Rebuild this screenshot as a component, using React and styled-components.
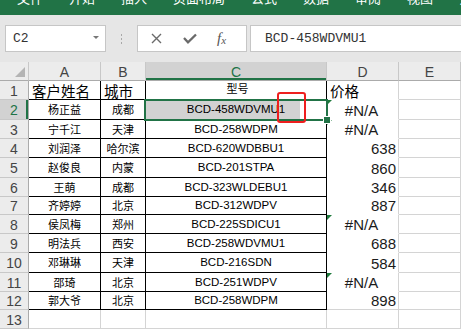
import React from 'react';
import styled, { createGlobalStyle } from 'styled-components';

const Global = createGlobalStyle`
  html, body { margin: 0; padding: 0; background: #fff; overflow: hidden; }
  body { font-family: "Noto Sans CJK SC", "Liberation Sans", sans-serif; }
`;

const Page = styled.div`
  width: 461px;
  height: 329px;
  overflow: hidden;
  position: relative;
  display: flex;
  flex-direction: column;
`;

const Ribbon = styled.div`
  flex: none;
  height: 15px;
  background: #217346;
  overflow: hidden;
`;

const Tabs = styled.div`
  display: flex;
  gap: 26px;
  padding-left: 17px;
  margin-top: -9px;
  color: #fff;
  font-size: 13px;
  line-height: 13px;
  white-space: nowrap;
`;

const FormulaArea = styled.div`
  flex: none;
  height: 47px;
  box-sizing: border-box;
  padding-top: 10px;
  background: #e6e6e6;
  display: flex;
  align-items: flex-start;
`;

const Box = styled.div`
  height: 27px;
  box-sizing: border-box;
  background: #fff;
  border: 1px solid #c6c6c6;
  display: flex;
  align-items: center;
`;

const NameBox = styled(Box)`
  margin-left: 5px;
  width: 101px;
  justify-content: space-between;
  padding: 0 6px 0 7px;
  font-family: "Liberation Mono", "DejaVu Sans Mono", monospace;
  font-size: 13px;
  color: #333;
`;

const DropArrow = styled.span`
  width: 0;
  height: 0;
  border-left: 3px solid transparent;
  border-right: 3px solid transparent;
  border-top: 3px solid #777;
  margin-top: -2px;
`;

const Sep = styled.div`
  width: 31px;
  height: 27px;
  display: flex;
  flex-direction: column;
  align-items: center;
  justify-content: center;
  gap: 2px;
`;

const Dot = styled.span`
  width: 1px;
  height: 2px;
  background: #a8a8a8;
`;

const FuncBox = styled(Box)`
  width: 110px;
  padding-left: 13px;
  gap: 21px;
  color: #6a6a6a;
`;

const Fx = styled.span`
  font-family: "Liberation Serif", serif;
  font-style: italic;
  font-size: 15px;
  color: #555;
  margin-left: -1px;
  sub {
    font-size: 11px;
    vertical-align: -1px;
  }
`;

const Input = styled(Box)`
  flex: 1;
  margin-left: 3px;
  margin-right: -4px;
  padding-left: 14px;
  font-family: "Liberation Mono", "DejaVu Sans Mono", monospace;
  font-size: 13px;
  color: #333;
`;

const Sheet = styled.div`
  flex: none;
  position: relative;
  display: grid;
  grid-template-columns: 29px 72px 45px 181px 72px 1fr;
  grid-template-rows: ${p => p.$rows};
`;

const Head = styled.div`
  box-sizing: border-box;
  background: ${p => (p.$sel ? '#d2d2d2' : '#ececec')};
  color: ${p => (p.$sel ? '#217346' : '#444')};
  border-right: 1px solid ${p => (p.$row ? '#ababab' : '#c8c8c8')};
  border-bottom: 1px solid ${p => (p.$row ? '#c8c8c8' : '#ababab')};
  box-shadow: ${p =>
    p.$sel ? (p.$row ? 'inset -2px 0 0 #217346' : 'inset 0 -2px 0 #217346') : 'none'};
  font-family: "Liberation Sans", Arial, sans-serif;
  font-size: 14px;
  display: flex;
  align-items: center;
  justify-content: center;
  padding-top: 1px;
`;

const Corner = styled(Head)`
  position: relative;
  &::after {
    content: '';
    position: absolute;
    right: 3px;
    bottom: 3px;
    border-left: 10px solid transparent;
    border-bottom: 10px solid #b4b4b4;
  }
`;

const Cell = styled.div`
  box-sizing: border-box;
  position: relative;
  overflow: hidden;
  white-space: nowrap;
  border-right: 1px solid ${p => (p.$boxed ? '#000' : '#d4d4d4')};
  border-bottom: 1px solid ${p => (p.$boxed ? '#000' : p.$noLine ? '#fff' : '#d4d4d4')};
  display: flex;
  color: #000;
`;

const TitleCell = styled(Cell)`
  align-items: flex-end;
  justify-content: ${p => (p.$center ? 'center' : 'flex-start')};
  padding: 0 0 0 3px;
  font-size: ${p => (p.$center ? '11px' : '14.5px')};
  line-height: 17px;
  padding-bottom: ${p => (p.$center ? '2px' : '0')};
`;

const NameCell = styled(Cell)`
  align-items: center;
  justify-content: center;
  font-size: 11px;
  padding-bottom: 1px;
`;

const ModelCell = styled(Cell)`
  align-items: center;
  justify-content: center;
  font-family: "Liberation Sans", Arial, sans-serif;
  font-size: 11.5px;
  padding-bottom: 1px;
  background: ${p => (p.$shade ? 'linear-gradient(to right, #d2d2d2 0 154px, #fff 154px)' : '#fff')};
`;

const PriceCell = styled(Cell)`
  align-items: flex-end;
  justify-content: ${p => (p.$err ? 'center' : 'flex-end')};
  padding-right: 2px;
  font-family: "Liberation Sans", Arial, sans-serif;
  font-size: 15px;
  line-height: 16px;
  color: #1b1b1b;
`;

const ErrMark = styled.span`
  position: absolute;
  left: 0;
  top: 0;
  width: 0;
  height: 0;
  border-top: 5px solid #1e7a3c;
  border-right: 5px solid transparent;
`;

const Selection = styled.div`
  position: absolute;
  left: 144px;
  top: 37px;
  width: 184px;
  height: 22px;
  box-sizing: border-box;
  border: 2px solid #217346;
  pointer-events: none;
`;

const Handle = styled.span`
  position: absolute;
  right: -4px;
  bottom: -4px;
  width: 6px;
  height: 6px;
  box-sizing: border-box;
  background: #217346;
  outline: 1px solid #fff;
`;

const Marker = styled.div`
  position: absolute;
  left: 277px;
  top: 92px;
  width: 29px;
  height: 31px;
  box-sizing: border-box;
  border: 2px solid #ee1f1f;
  border-radius: 3px;
  pointer-events: none;
`;

const tabs = ['文件', '开始', '插入', '页面布局', '公式', '数据', '审阅', '视图', '开发工具'];

const data = [
  ['杨正益', '成都', 'BCD-458WDVMU1', '#N/A'],
  ['宁千江', '天津', 'BCD-258WDPM', '#N/A'],
  ['刘润泽', '哈尔滨', 'BCD-620WDBBU1', '638'],
  ['赵俊良', '内蒙', 'BCD-201STPA', '860'],
  ['王萌', '成都', 'BCD-323WLDEBU1', '346'],
  ['齐婷婷', '北京', 'BCD-312WDPV', '887'],
  ['侯凤梅', '郑州', 'BCD-225SDICU1', '#N/A'],
  ['明法兵', '西安', 'BCD-258WDVMU1', '688'],
  ['邓琳琳', '天津', 'BCD-216SDN', '584'],
  ['邵琦', '北京', 'BCD-251WDPV', '#N/A'],
  ['郭大爷', '北京', 'BCD-258WDPM', '898'],
];

const rowHeights = [19, 19, 20, 19, 19, 20, 19, 18, 19, 19, 20, 19, 18, 19, 19];

const XIcon = () => (
  <svg width="11" height="11" viewBox="0 0 11 11">
    <path d="M1 1 L10 10 M10 1 L1 10" stroke="#6a6a6a" strokeWidth="1.4" fill="none" />
  </svg>
);

const CheckIcon = () => (
  <svg width="14" height="11" viewBox="0 0 14 11">
    <path d="M1 5 L5 9.3 L13 1.5" stroke="#6a6a6a" strokeWidth="2.3" fill="none" />
  </svg>
);

export default function App() {
  return (
    <Page>
      <Global />
      <Ribbon>
        <Tabs>
          {tabs.map(t => (
            <span key={t}>{t}</span>
          ))}
        </Tabs>
      </Ribbon>
      <FormulaArea>
        <NameBox>
          <span>C2</span>
          <DropArrow />
        </NameBox>
        <Sep>
          <Dot />
          <Dot />
          <Dot />
        </Sep>
        <FuncBox>
          <XIcon />
          <CheckIcon />
          <Fx>
            f<sub>x</sub>
          </Fx>
        </FuncBox>
        <Input>BCD-458WDVMU1</Input>
      </FormulaArea>
      <Sheet $rows={rowHeights.map(h => h + 'px').join(' ')}>
        <Corner />
        {['A', 'B', 'C', 'D', 'E'].map(c => (
          <Head key={c} $sel={c === 'C'}>
            {c}
          </Head>
        ))}

        <Head $row>1</Head>
        <TitleCell $boxed>客户姓名</TitleCell>
        <TitleCell $boxed>城市</TitleCell>
        <TitleCell $boxed $center>型号</TitleCell>
        <TitleCell $noLine>价格</TitleCell>
        <Cell />

        {data.map((r, i) => {
          const n = i + 2;
          const err = r[3] === '#N/A';
          return (
            <React.Fragment key={n}>
              <Head $row $sel={n === 2}>
                {n}
              </Head>
              <NameCell $boxed>{r[0]}</NameCell>
              <NameCell $boxed>{r[1]}</NameCell>
              <ModelCell $boxed $shade={n === 2}>
                {r[2]}
              </ModelCell>
              <PriceCell $err={err} $noLine={n !== 12}>
                {err && <ErrMark />}
                {r[3]}
              </PriceCell>
              <Cell />
            </React.Fragment>
          );
        })}

        {[13, 14].map(n => (
          <React.Fragment key={n}>
            <Head $row>{n}</Head>
            <Cell />
            <Cell />
            <Cell />
            <Cell />
            <Cell />
          </React.Fragment>
        ))}

        <Selection>
          <Handle />
        </Selection>
      </Sheet>
      <Marker />
    </Page>
  );
}
